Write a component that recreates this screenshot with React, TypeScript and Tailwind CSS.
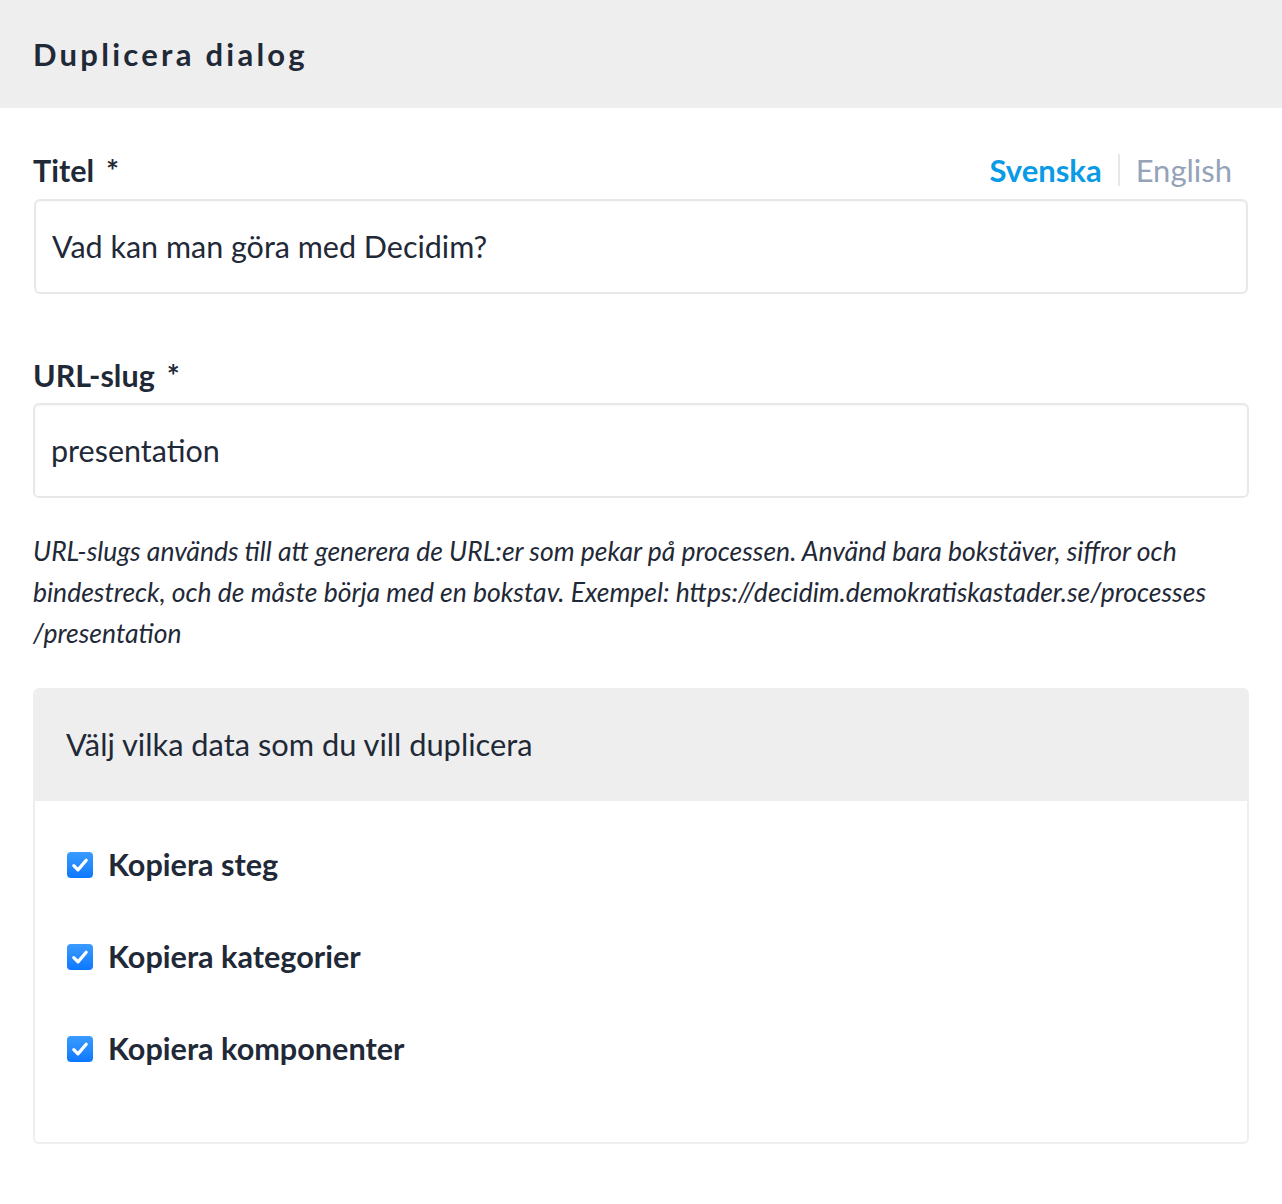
import React from "react";

const font = { fontFamily: "Lato, 'Noto Sans', sans-serif" };

function Check() {
  return (
    <span className="flex h-[26px] w-[26px] shrink-0 items-center justify-center rounded-[4px] bg-gradient-to-b from-[#3a9bff] to-[#0a78ff]">
      <svg width="26" height="26" viewBox="0 0 26 26" fill="none">
        <path d="M6.8 13.6l4.2 4.3 8.2-9.6" stroke="white" strokeWidth="3.2" strokeLinecap="round" strokeLinejoin="round" />
      </svg>
    </span>
  );
}

export default function App() {
  return (
    <div className="min-h-[1204px] w-full bg-white text-[#1f2937]" style={font}>
      <div className="flex h-[108px] items-center bg-[#eeeeee] px-[33px]">
        <h1 className="text-[31px] font-bold tracking-[0.105em] text-[#1f2937]">Duplicera dialog</h1>
      </div>
      <div className="px-[33px] pt-[42px]">
        <div className="flex h-[40px] items-center justify-between">
          <label className="text-[30.5px] font-bold leading-[40px]">
            Titel<span className="ml-[12px]">*</span>
          </label>
          <div className="flex items-center pr-[17px] text-[31px] leading-[40px]">
            <span className="font-bold text-[#0a9be6]">Svenska</span>
            <span className="mx-[16px] h-[32px] w-[2px] bg-[#e5e7eb]" />
            <span className="text-[#94a3b8]">English</span>
          </div>
        </div>
        <div className="mx-[1px] mt-[9px] flex h-[95px] items-center rounded-[6px] border-2 border-[#e8e8e8] px-[16px] text-[30.5px] shadow-[inset_0_1px_2px_rgba(0,0,0,0.04)]">
          Vad kan man göra med Decidim?
        </div>
        <label className="mt-[61px] block h-[40px] text-[30.5px] font-bold leading-[40px]">
          URL-slug<span className="ml-[12px]">*</span>
        </label>
        <div className="mt-[8px] flex h-[95px] items-center rounded-[6px] border-2 border-[#e8e8e8] px-[16px] text-[30.5px] shadow-[inset_0_1px_2px_rgba(0,0,0,0.04)]">
          presentation
        </div>
        <p className="mt-[33px] whitespace-nowrap text-[26.5px] italic leading-[41px]">
          URL-slugs används till att generera de URL:er som pekar på processen. Använd bara bokstäver, siffror och
          <br />
          bindestreck, och de måste börja med en bokstav. Exempel: https://decidim.demokratiskastader.se/processes
          <br />
          /presentation
        </p>
        <div className="mt-[34px] overflow-hidden rounded-[6px] border-2 border-[#eeeeee]">
          <div className="flex h-[111px] items-center bg-[#eeeeee] px-[31px] text-[30.8px]">
            Välj vilka data som du vill duplicera
          </div>
          <div className="flex flex-col gap-[52px] px-[32px] pb-[73px] pt-[44px]">
            {["Kopiera steg", "Kopiera kategorier", "Kopiera komponenter"].map((t) => (
              <div key={t} className="flex h-[40px] items-center gap-[15px]">
                <Check />
                <span className="text-[30.6px] font-bold">{t}</span>
              </div>
            ))}
          </div>
        </div>
      </div>
    </div>
  );
}
